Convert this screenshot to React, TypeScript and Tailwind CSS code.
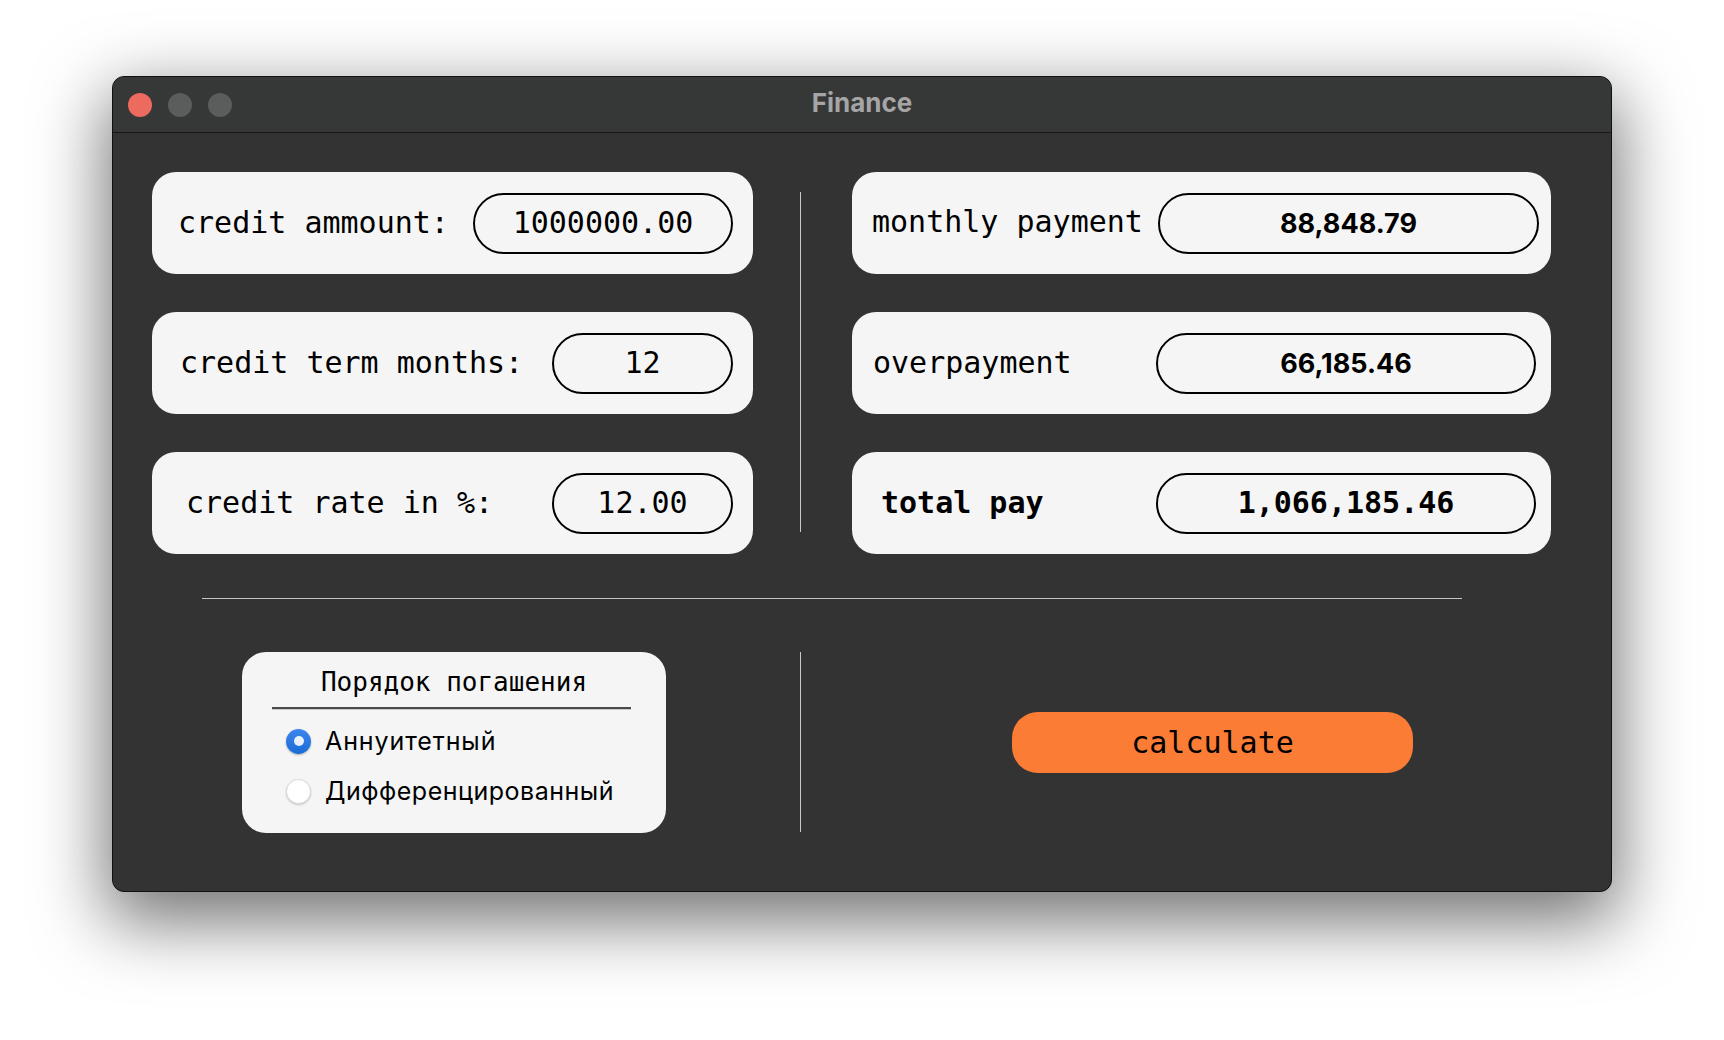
import React from "react";

const mono = { fontFamily: '"DejaVu Sans Mono", "Liberation Mono", monospace' };
const sans = { fontFamily: 'Inter, "Noto Sans", "Liberation Sans", sans-serif' };

function LeftCard({ label, value, pl, inputW }: { label: string; value: string; pl: string; inputW: string }) {
  return (
    <div className={`h-[102px] rounded-[24px] bg-[#f5f5f5] flex items-center ${pl} pr-[20px]`}>
      <span className="text-[30px] leading-none text-black whitespace-pre" style={mono}>{label}</span>
      <div className={`ml-auto ${inputW} h-[61px] rounded-full border-2 border-black flex items-center justify-center`}>
        <span className="text-[30px] leading-none text-black" style={mono}>{value}</span>
      </div>
    </div>
  );
}

export default function App() {
  return (
    <div className="w-[1724px] h-[1040px] bg-white overflow-hidden pt-[76px] pl-[112px]">
      <div className="w-[1500px] h-[816px] rounded-[12px] bg-[#333333] border border-[#111] shadow-[0_24px_70px_6px_rgba(0,0,0,0.55)] overflow-hidden flex flex-col">
        {/* title bar */}
        <div className="h-[56px] shrink-0 bg-[#363737] border-b border-[#161616] grid grid-cols-[1fr_auto_1fr] items-center">
          <div className="flex items-center gap-[16px] pl-[15px]">
            <span className="w-[24px] h-[24px] rounded-full bg-[#ec6a5e]" />
            <span className="w-[24px] h-[24px] rounded-full bg-[#5b5c5c]" />
            <span className="w-[24px] h-[24px] rounded-full bg-[#5b5c5c]" />
          </div>
          <div className="text-[26px] font-bold text-[#a5a5a5] leading-none pb-[4px]" style={sans}>Finance</div>
          <div />
        </div>

        {/* top section */}
        <div className="flex pt-[39px] pl-[39px]">
          <div className="w-[601px] flex flex-col gap-[38px]">
            <LeftCard label="credit ammount:" value="1000000.00" pl="pl-[26px]" inputW="w-[260px]" />
            <LeftCard label="credit term months:" value="12" pl="pl-[28px]" inputW="w-[181px]" />
            <LeftCard label="credit rate in %:" value="12.00" pl="pl-[34px]" inputW="w-[181px]" />
          </div>
          <div className="ml-[47px] w-px bg-[#c9c9c9] mt-[20px] mb-[22px]" />
          <div className="ml-[51px] w-[699px] flex flex-col gap-[38px]">
            <div className="h-[102px] rounded-[24px] bg-[#f5f5f5] flex items-center pl-[20px] pr-[12px]">
              <span className="text-[30px] leading-none text-black whitespace-pre pb-[3px]" style={mono}>monthly payment</span>
              <div className="ml-auto w-[381px] h-[61px] rounded-full border-2 border-black flex items-center justify-center">
                <span className="text-[27px] font-bold leading-none text-black" style={sans}>88,848.79</span>
              </div>
            </div>
            <div className="h-[102px] rounded-[24px] bg-[#f5f5f5] flex items-center pl-[21px] pr-[15px]">
              <span className="text-[30px] leading-none text-black whitespace-pre" style={mono}>overpayment</span>
              <div className="ml-auto w-[380px] h-[61px] rounded-full border-2 border-black flex items-center justify-center">
                <span className="text-[27px] font-bold leading-none text-black" style={sans}>66,185.46</span>
              </div>
            </div>
            <div className="h-[102px] rounded-[24px] bg-[#f5f5f5] flex items-center pl-[29px] pr-[15px]">
              <span className="text-[30px] font-bold leading-none text-black whitespace-pre" style={mono}>total pay</span>
              <div className="ml-auto w-[380px] h-[61px] rounded-full border-2 border-black flex items-center justify-center">
                <span className="text-[30px] font-bold leading-none text-black" style={mono}>1,066,185.46</span>
              </div>
            </div>
          </div>
        </div>

        {/* horizontal divider */}
        <div className="mt-[44px] ml-[89px] w-[1260px] h-px bg-[#c4c4c4]" />

        {/* bottom section */}
        <div className="mt-[53px] flex h-[181px]">
          <div className="w-[687px] pl-[129px] flex items-center">
            <div className="w-[424px] h-[181px] rounded-[24px] bg-[#f5f5f5] flex flex-col pt-[15px]">
              <div className="text-center text-[26px] leading-[30px] text-black whitespace-pre" style={mono}>Порядок погашения</div>
              <div className="mt-[10px] ml-[30px] w-[359px] border-t-2 border-t-[#4a4a4a] border-b border-b-[#c8c8c8]" />
              <div className="mt-[6px] flex flex-col pl-[44px]">
                <div className="h-[50px] flex items-center gap-[14px]">
                  <span className="w-[25px] h-[25px] rounded-full bg-gradient-to-b from-[#3b86ec] to-[#1a6bd6] shadow-[0_1px_2px_rgba(0,0,0,0.3)] flex items-center justify-center">
                    <span className="w-[10px] h-[10px] rounded-full bg-[#e8f0fc]" />
                  </span>
                  <span className="text-[25px] leading-none text-black tracking-[0.9px]" style={sans}>Аннуитетный</span>
                </div>
                <div className="h-[50px] flex items-center gap-[14px]">
                  <span className="w-[25px] h-[25px] rounded-full bg-white border border-[#dadada] shadow-[0_1px_2px_rgba(0,0,0,0.2)]" />
                  <span className="text-[25px] leading-none text-black tracking-[0.5px]" style={sans}>Дифференцированный</span>
                </div>
              </div>
            </div>
          </div>
          <div className="w-px h-[180px] bg-[#c9c9c9]" />
          <div className="flex-1 flex items-center">
            <button className="ml-[211px] w-[401px] h-[61px] rounded-[26px] bg-[#fb7c35] flex items-center justify-center">
              <span className="text-[30px] leading-none text-black" style={mono}>calculate</span>
            </button>
          </div>
        </div>
      </div>
    </div>
  );
}
